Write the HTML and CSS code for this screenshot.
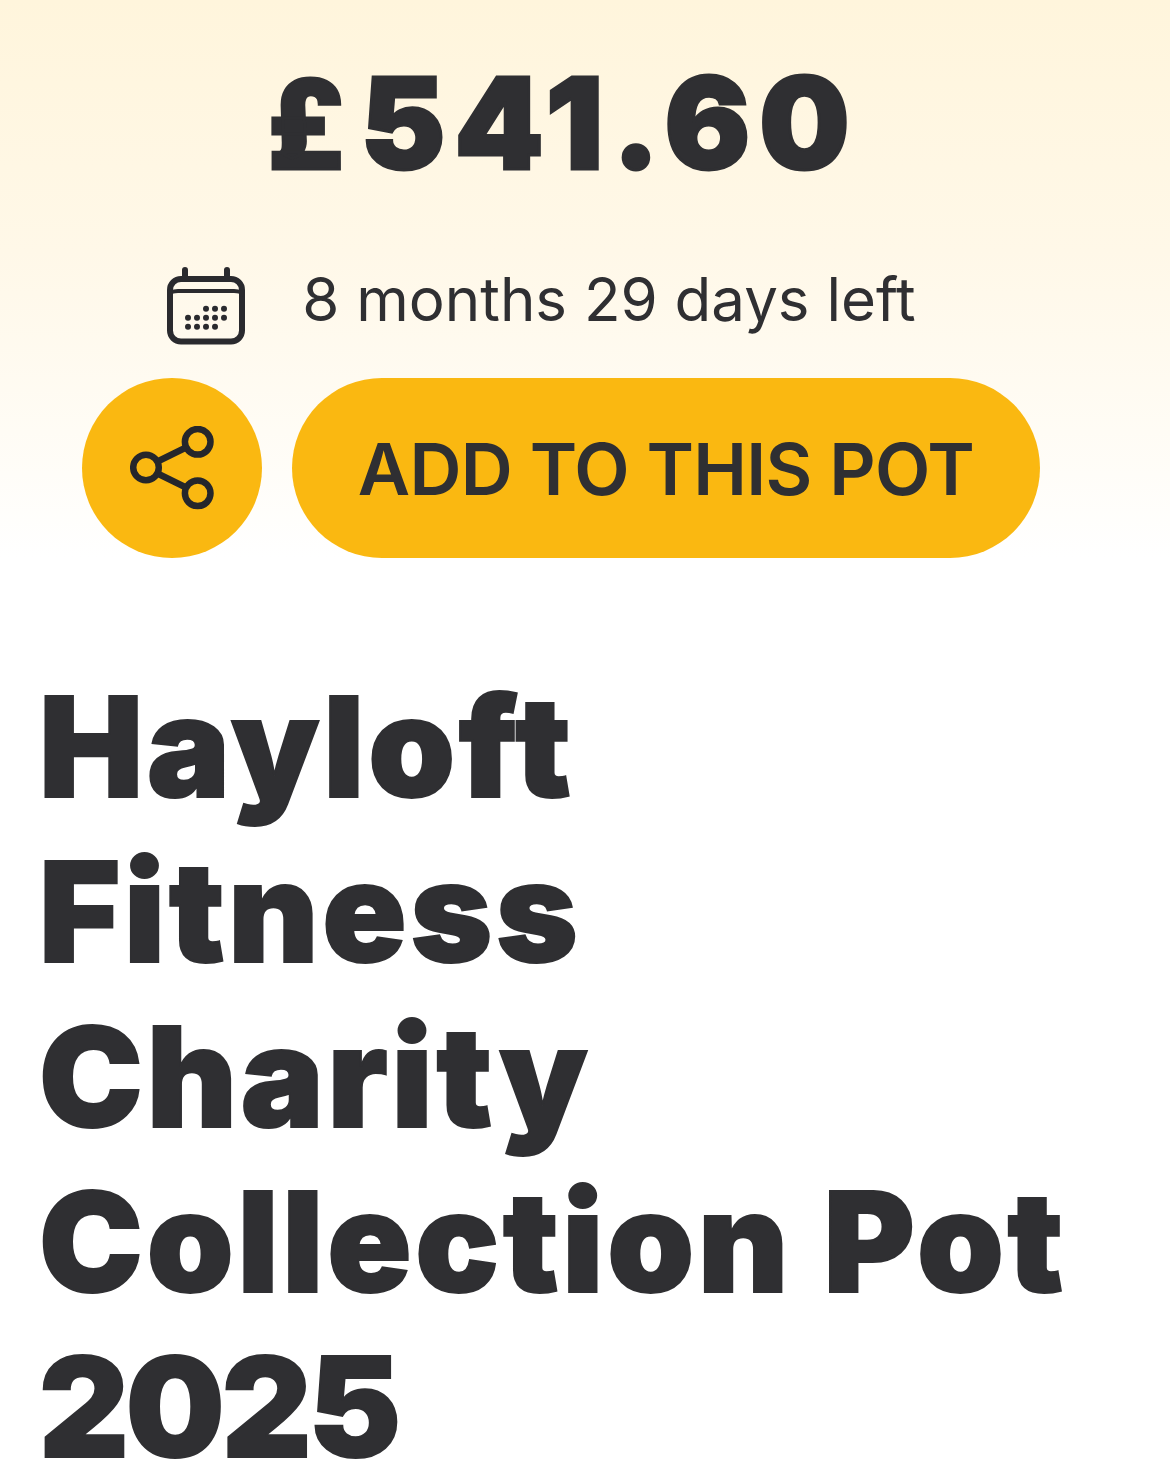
FILE: index.html
```html
<!DOCTYPE html>
<html lang="en">
<head>
<meta charset="utf-8">
<title>Hayloft Fitness Charity Collection Pot 2025</title>
<link rel="stylesheet" href="styles.css">
</head>
<body>
<main class="page">
  <section class="hero">
    <div class="amount"><span class="currency">£</span>541.60</div>
    <div class="deadline">
      <svg class="calendar" viewBox="0 0 78 78" fill="none" stroke="#2a2a2e" stroke-width="6" stroke-linecap="round">
        <path d="M18 3v9M60 3v9"/>
        <rect x="3" y="12" width="72" height="62.500" rx="11"/>
        <path d="M3 28c0-3 3-4 8-4h56c5 0 8 1 8 4" stroke-width="4"/>
        <g fill="#2a2a2e" stroke="none">
          <circle cx="39" cy="41.700" r="3"/><circle cx="48" cy="41.700" r="3"/><circle cx="57" cy="41.700" r="3"/>
          <circle cx="21" cy="50.700" r="3"/><circle cx="30" cy="50.700" r="3"/><circle cx="39" cy="50.700" r="3"/><circle cx="48" cy="50.700" r="3"/><circle cx="57" cy="50.700" r="3"/>
          <circle cx="21" cy="59.700" r="3"/><circle cx="30" cy="59.700" r="3"/><circle cx="39" cy="59.700" r="3"/><circle cx="48" cy="59.700" r="3"/>
        </g>
      </svg>
      <span class="deadline-text">8 months 29 days left</span>
    </div>
    <div class="actions">
      <button class="share" type="button" aria-label="Share">
        <svg class="share-icon" viewBox="0 0 84 84" fill="none" stroke="#25262b" stroke-width="6.5">
          <circle cx="16" cy="41.500" r="12.800"/>
          <circle cx="67.700" cy="15.800" r="12.800"/>
          <circle cx="67.700" cy="67.300" r="12.800"/>
          <path d="M27.500 35.500l28.500-14M27.500 47.500l28.500 14"/>
        </svg>
      </button>
      <button class="add" type="button">ADD TO THIS POT</button>
    </div>
  </section>
  <h1 class="title">Hayloft Fitness Charity Collection Pot <span class="year">2025</span></h1>
</main>
</body>
</html>
```
FILE: styles.css
```css
* { box-sizing: border-box; }
html, body { margin: 0; height: 100%; }
body {
  background: #fff;
  color: #2f2f32;
  font-family: Inter, "Liberation Sans", sans-serif;
  overflow: hidden;
}
.page { width: 1170px; height: 1462px; overflow: hidden; }
.hero {
  height: 558px;
  padding: 46px 48px 0 0;
  display: flex;
  flex-direction: column;
  align-items: center;
  background: linear-gradient(180deg, #fff5dc 0%, #fff8e8 45%, #fffdf8 85%, #fff 100%);
}
.amount {
  margin-left: 3px;
  font-size: 127px;
  line-height: 154px;
  font-weight: 900;
  letter-spacing: 9px;
  -webkit-text-stroke: 3px #2f2f32;
}
.currency {
  font-family: Roboto, Inter, sans-serif;
  margin-right: 18px;
  letter-spacing: 0;
}
.deadline {
  display: flex;
  align-items: center;
  gap: 57px;
  margin-top: 64px;
  margin-left: -39px;
  height: 80px;
}
.calendar { width: 78px; height: 78px; display: block; }
.deadline-text {
  font-size: 60px;
  line-height: 72px;
  font-weight: 400;
  position: relative;
  top: -7px;
}
.actions {
  display: flex;
  gap: 30px;
  margin-top: 33px;
}
.share, .add {
  height: 180px;
  border: 0;
  background: #fab811;
  color: #2f2f32;
  font-family: inherit;
  padding: 0;
  display: flex;
  align-items: center;
  justify-content: center;
}
.share { width: 180px; border-radius: 50%; }
.share-icon { width: 84px; height: 84px; display: block; }
.add {
  width: 748px;
  border-radius: 90px;
  font-size: 72px;
  font-weight: 600;
  letter-spacing: -0.67px;
}
.title {
  margin: 106px 0 0 39px;
  width: 1050px;
  font-size: 139px;
  line-height: 165px;
  font-weight: 900;
  letter-spacing: 3.8px;
  -webkit-text-stroke: 2px #2f2f32;
}
.year { letter-spacing: -3px; }
```
